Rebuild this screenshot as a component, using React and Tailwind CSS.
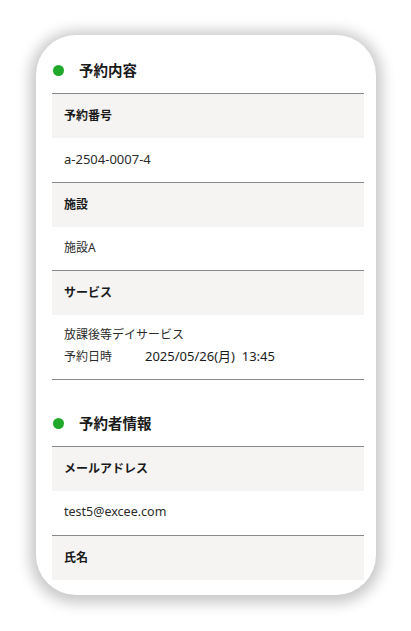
import React from 'react';

const font = { fontFamily: '"Noto Sans", "Noto Sans CJK JP", sans-serif' };

const SectionTitle = ({ children, className = '' }) => (
  <div className={`flex items-center gap-[15px] h-[46px] border-b border-[#8a8a8a] ${className}`}>
    <span className="w-[11px] h-[11px] rounded-full bg-[#1fa82a] ml-[1px]" />
    <h2 className="text-[14.5px] font-bold text-[#1a1a1a]">{children}</h2>
  </div>
);

const Row = ({ label, children, last }) => (
  <div className={last ? '' : 'border-b border-[#8a8a8a]'}>
    <div className="h-[44px] flex items-center px-3 bg-[#f5f4f2] text-[12px] font-bold text-[#1a1a1a]">
      {label}
    </div>
    {children}
  </div>
);

const Value = ({ children, className = 'text-[12.5px]' }) => (
  <div className={`h-[43.5px] flex items-center px-3 text-[#2b2b2b] ${className}`}>{children}</div>
);

export default function App() {
  return (
    <div className="min-h-screen bg-white pt-[35px] pl-[36px]" style={font}>
      <div className="w-[340px] h-[560px] rounded-[40px] bg-white overflow-hidden shadow-[0_2px_14px_6px_rgba(0,0,0,0.22)] pl-4 pr-3 pt-[13px]">
        <SectionTitle>予約内容</SectionTitle>
        <Row label="予約番号">
          <Value className="text-[13px]">a-2504-0007-4</Value>
        </Row>
        <Row label="施設">
          <Value className="text-[12px]">施設A</Value>
        </Row>
        <Row label="サービス">
          <div className="h-[64px] px-3 pt-[11px] text-[12px] text-[#2b2b2b] flex flex-col gap-[3px]">
            <div>放課後等デイサービス</div>
            <div className="flex items-baseline">
              <span className="w-[81px]">予約日時</span>
              <span className="text-[13px] text-[#1a1a1a]">2025/05/26(月)&nbsp;&nbsp;13:45</span>
            </div>
          </div>
        </Row>
        <SectionTitle className="mt-[21px]">予約者情報</SectionTitle>
        <Row label="メールアドレス">
          <Value>test5@excee.com</Value>
        </Row>
        <Row label="氏名" last />
      </div>
    </div>
  );
}
